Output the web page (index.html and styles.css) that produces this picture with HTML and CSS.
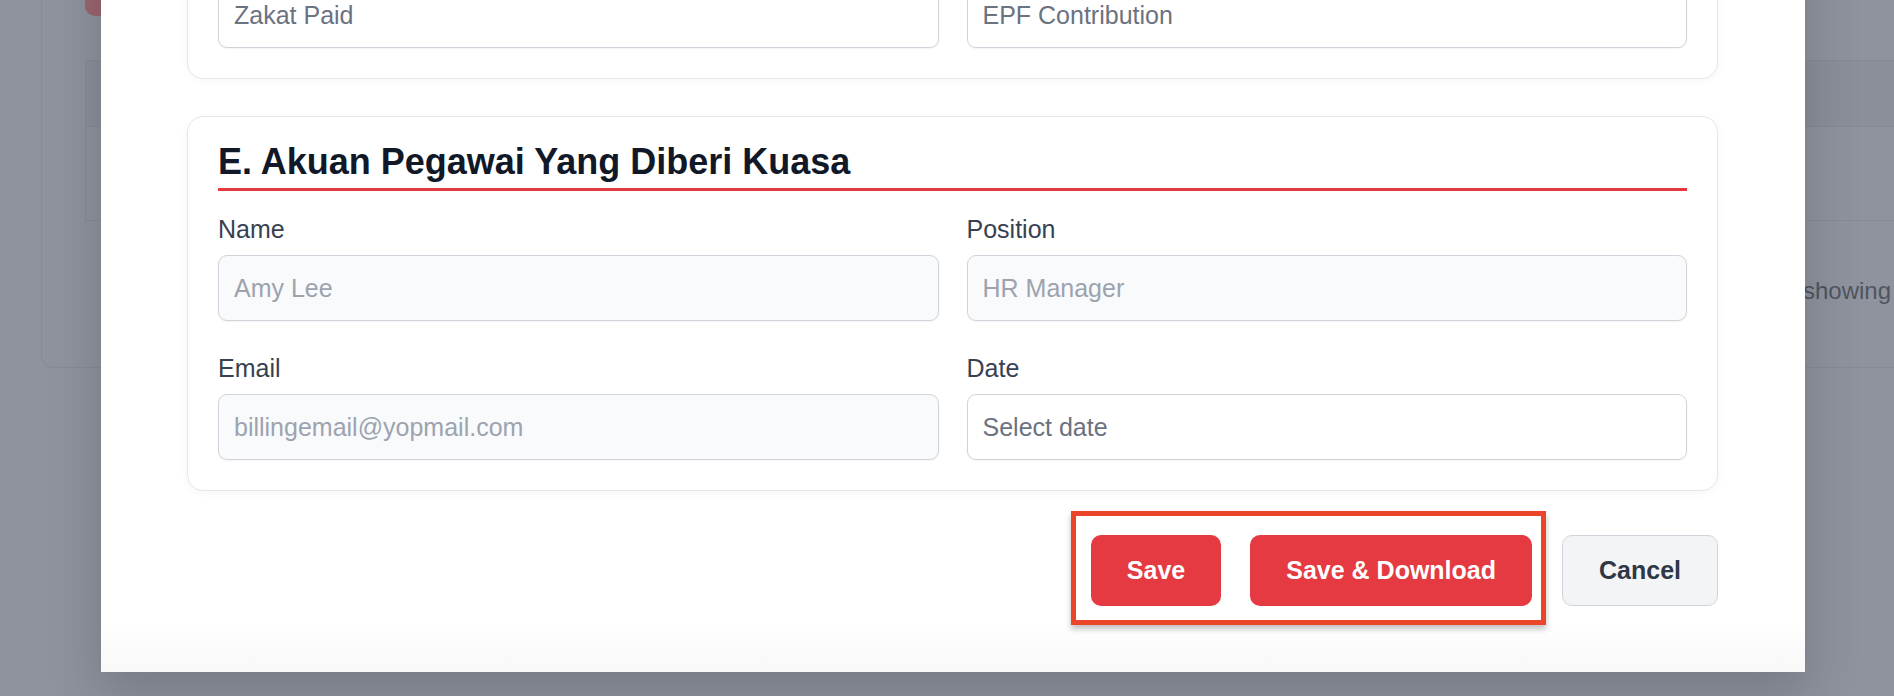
FILE: index.html
```html
<!DOCTYPE html>
<html lang="en">
<head>
<meta charset="utf-8">
<title>Borang EA</title>
<link rel="stylesheet" href="styles.css">
</head>
<body>
  <div class="bg">
    <div class="bg-card">
      <div class="bg-btn"></div>
      <div class="bg-table">
        <div class="bg-thead"></div>
        <div class="bg-row"></div>
      </div>
      <div class="bg-foot">showing 1 to 10 of 24 entries</div>
    </div>
    <div class="bg-copy">Copyright © 2024 Payroll. All rights reserved by yoursystem.</div>
  </div>

  <div class="modal">
    <section class="card">
      <div class="grid">
        <div class="field">
          <label class="label">Zakat</label>
          <div class="input">Zakat Paid</div>
        </div>
        <div class="field">
          <label class="label">EPF</label>
          <div class="input">EPF Contribution</div>
        </div>
      </div>
    </section>

    <section class="card card-e">
      <h2 class="card-title">E. Akuan Pegawai Yang Diberi Kuasa</h2>
      <div class="grid">
        <div class="field">
          <label class="label">Name</label>
          <div class="input readonly">Amy Lee</div>
        </div>
        <div class="field">
          <label class="label">Position</label>
          <div class="input readonly">HR Manager</div>
        </div>
        <div class="field">
          <label class="label">Email</label>
          <div class="input readonly">billingemail@yopmail.com</div>
        </div>
        <div class="field">
          <label class="label">Date</label>
          <div class="input">Select date</div>
        </div>
      </div>
    </section>

    <div class="actions">
      <div class="primary-group">
        <button class="btn btn-primary">Save</button>
        <button class="btn btn-primary">Save &amp; Download</button>
      </div>
      <button class="btn btn-secondary">Cancel</button>
    </div>
  </div>
</body>
</html>
```

FILE: styles.css
```css
* { box-sizing: border-box; }

html, body { margin: 0; padding: 0; }

body {
  width: 1894px;
  height: 696px;
  overflow: hidden;
  position: relative;
  background: #8f939d;
  font-family: "Liberation Sans", Arial, Helvetica, sans-serif;
}

/* ---------- dimmed background page ---------- */
.bg { padding-left: 41px; }

.bg-card {
  height: 368px;
  border-left: 1px solid #878b95;
  border-bottom: 1px solid #878b95;
  border-bottom-left-radius: 12px;
  padding-left: 43px;
}

.bg-btn {
  width: 320px;
  height: 16px;
  background: #9b6571;
  border-bottom-left-radius: 10px;
}

.bg-table {
  margin-top: 44px;
  border-left: 1px solid #878b95;
}

.bg-thead {
  height: 67px;
  background: #8b8f99;
  border-top: 1px solid #878b95;
  border-bottom: 1px solid #878b95;
}

.bg-row {
  height: 94px;
  border-bottom: 1px solid #878b95;
}

.bg-foot {
  padding: 52px 0 0 1718px;
  font-size: 24px;
  line-height: 36px;
  color: #4f5561;
  white-space: nowrap;
}

.bg-copy {
  margin-top: 272px;
  padding-left: 998px;
  font-size: 22px;
  line-height: 36px;
  color: #767a84;
  white-space: nowrap;
}

/* ---------- modal ---------- */
.modal {
  position: absolute;
  left: 101px;
  bottom: 24px;
  width: 1704px;
  padding: 0 87px 66px 86px;
  background: linear-gradient(to bottom, #ffffff calc(100% - 48px), #f8f8f9 100%);
  box-shadow: 0 22px 50px 4px rgba(0, 0, 0, 0.16);
}

.card {
  background: #ffffff;
  border: 1px solid #e5e7eb;
  border-radius: 16px;
  padding: 23px 30px 30px;
  box-shadow: 0 2px 8px rgba(0, 0, 0, 0.04);
  margin-bottom: 37px;
}

.card-e { margin-bottom: 0; }

.card-title {
  margin: 0;
  font-size: 36px;
  line-height: 44px;
  font-weight: 700;
  color: #111827;
  padding-bottom: 4px;
  border-bottom: 3px solid #e5393f;
}

.grid {
  display: grid;
  grid-template-columns: 1fr 1fr;
  column-gap: 28px;
  row-gap: 29px;
  margin-top: 20px;
}

.label {
  display: block;
  font-size: 25px;
  line-height: 36px;
  color: #374151;
  margin-bottom: 8px;
}

.input {
  height: 66px;
  border: 1px solid #d1d5db;
  border-radius: 9px;
  padding: 0 15px;
  display: flex;
  align-items: center;
  font-size: 25px;
  line-height: 36px;
  color: #6b7280;
  background: #ffffff;
  box-shadow: 0 1px 2px rgba(0, 0, 0, 0.05);
}

.input.readonly {
  background: #f9fafb;
  color: #9ca3af;
}

/* ---------- actions ---------- */
.actions {
  margin-top: 44px;
  display: flex;
  justify-content: flex-end;
  gap: 30px;
}

.primary-group {
  position: relative;
  display: flex;
  gap: 29px;
}

.primary-group::after {
  content: "";
  position: absolute;
  left: -20px;
  top: -24px;
  right: -14px;
  bottom: -19px;
  border: 5px solid #ea4429;
  box-shadow: 0 4px 6px rgba(0, 0, 0, 0.25);
  pointer-events: none;
}

.btn {
  height: 71px;
  padding: 0 36px;
  font-family: inherit;
  font-size: 25px;
  font-weight: 700;
  border-radius: 10px;
  border: none;
  display: flex;
  align-items: center;
  cursor: pointer;
}

.btn-primary {
  background: #e53a42;
  color: #ffffff;
}

.btn-secondary {
  background: #f3f4f6;
  color: #2f3746;
  border: 1px solid #d1d5db;
}
```
